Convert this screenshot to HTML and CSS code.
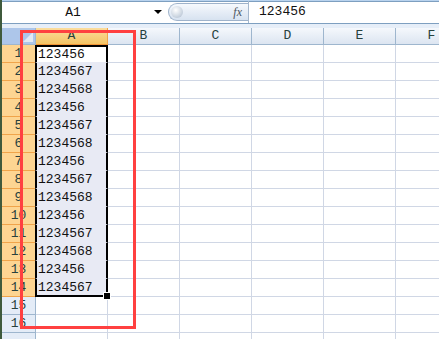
FILE: index.html
```html
<!DOCTYPE html>
<html lang="zh-CN">
  <head>
    <meta charset="UTF-8" />
    <title>Sheet1</title>
    <link rel="stylesheet" href="styles.css">
  </head>
  <body>
    <div class="window">
      <!-- 编辑栏 -->
      <div class="formula-bar">
        <div class="name-box">
          <span class="name">A1</span>
          <span class="arrow"></span>
        </div>
        <div class="fx-pill">
          <span class="knob"></span>
          <span class="fx">fx</span>
        </div>
        <div class="formula">123456</div>
      </div>
      <div class="bar-gap"></div>

      <!-- 表格 -->
      <div class="sheet">
        <div class="row head">
          <div class="corner"></div>
          <div class="col on">A</div>
          <div class="col">B</div>
          <div class="col">C</div>
          <div class="col">D</div>
          <div class="col">E</div>
          <div class="col">F</div>
        </div>
        <div class="row"><div class="rh on">1</div><div class="c sel first">123456</div><div class="c"></div><div class="c"></div><div class="c"></div><div class="c"></div><div class="c"></div></div>
        <div class="row"><div class="rh on">2</div><div class="c sel">1234567</div><div class="c"></div><div class="c"></div><div class="c"></div><div class="c"></div><div class="c"></div></div>
        <div class="row"><div class="rh on">3</div><div class="c sel">1234568</div><div class="c"></div><div class="c"></div><div class="c"></div><div class="c"></div><div class="c"></div></div>
        <div class="row"><div class="rh on">4</div><div class="c sel">123456</div><div class="c"></div><div class="c"></div><div class="c"></div><div class="c"></div><div class="c"></div></div>
        <div class="row"><div class="rh on">5</div><div class="c sel">1234567</div><div class="c"></div><div class="c"></div><div class="c"></div><div class="c"></div><div class="c"></div></div>
        <div class="row"><div class="rh on">6</div><div class="c sel">1234568</div><div class="c"></div><div class="c"></div><div class="c"></div><div class="c"></div><div class="c"></div></div>
        <div class="row"><div class="rh on">7</div><div class="c sel">123456</div><div class="c"></div><div class="c"></div><div class="c"></div><div class="c"></div><div class="c"></div></div>
        <div class="row"><div class="rh on">8</div><div class="c sel">1234567</div><div class="c"></div><div class="c"></div><div class="c"></div><div class="c"></div><div class="c"></div></div>
        <div class="row"><div class="rh on">9</div><div class="c sel">1234568</div><div class="c"></div><div class="c"></div><div class="c"></div><div class="c"></div><div class="c"></div></div>
        <div class="row"><div class="rh on">10</div><div class="c sel">123456</div><div class="c"></div><div class="c"></div><div class="c"></div><div class="c"></div><div class="c"></div></div>
        <div class="row"><div class="rh on">11</div><div class="c sel">1234567</div><div class="c"></div><div class="c"></div><div class="c"></div><div class="c"></div><div class="c"></div></div>
        <div class="row"><div class="rh on">12</div><div class="c sel">1234568</div><div class="c"></div><div class="c"></div><div class="c"></div><div class="c"></div><div class="c"></div></div>
        <div class="row"><div class="rh on">13</div><div class="c sel">123456</div><div class="c"></div><div class="c"></div><div class="c"></div><div class="c"></div><div class="c"></div></div>
        <div class="row"><div class="rh on">14</div><div class="c sel last">1234567</div><div class="c"></div><div class="c"></div><div class="c"></div><div class="c"></div><div class="c"></div></div>
        <div class="row"><div class="rh">15</div><div class="c"></div><div class="c"></div><div class="c"></div><div class="c"></div><div class="c"></div><div class="c"></div></div>
        <div class="row"><div class="rh">16</div><div class="c"></div><div class="c"></div><div class="c"></div><div class="c"></div><div class="c"></div><div class="c"></div></div>
        <div class="row"><div class="rh"></div><div class="c"></div><div class="c"></div><div class="c"></div><div class="c"></div><div class="c"></div><div class="c"></div></div>
      </div>

      <!-- 红色标注框 -->
      <div class="mark"></div>
    </div>
  </body>
</html>
```

FILE: styles.css
```css
* {
  margin: 0;
  padding: 0;
  box-sizing: border-box;
}

body {
  background: #fff;
  font-family: "Liberation Mono", "Noto Sans CJK SC", monospace;
  font-size: 13px;
  color: #111;
}

.window {
  position: relative;
  width: 439px;
  height: 339px;
  overflow: hidden;
  border-left: 2px solid #3f5a3c;
}

/* 编辑栏 */
.formula-bar {
  display: flex;
  align-items: center;
  height: 24px;
  background: #fff;
  border-top: 1px solid #b9d3ee;
  box-shadow: inset 0 1px 0 #7e9fc0;
  border-bottom: 1px solid #7e9fc0;
}

.name-box {
  display: flex;
  align-items: center;
  width: 166px;
  height: 100%;
}

.name {
  flex: 1;
  text-align: center;
  padding-right: 10px;
  padding-top: 1px;
}

.arrow {
  width: 0;
  height: 0;
  margin-right: 6px;
  border-left: 4px solid transparent;
  border-right: 4px solid transparent;
  border-top: 4px solid #000;
}

.fx-pill {
  display: flex;
  align-items: center;
  justify-content: space-between;
  width: 80px;
  height: 18px;
  padding: 0 6px 0 2px;
  border: 1px solid #9fb3cb;
  border-right: none;
  border-radius: 9px 0 0 9px;
  background: linear-gradient(#f6f9fd, #d7e2f0);
}

.knob {
  width: 12px;
  height: 12px;
  border-radius: 50%;
  background: radial-gradient(circle at 40% 35%, #fff, #c4cfdc 70%, #a9b6c6);
}

.fx {
  font-family: "Liberation Serif", serif;
  font-style: italic;
  font-size: 12px;
  color: #4b5461;
}

.formula {
  flex: 1;
  height: 100%;
  padding: 3px 0 0 10px;
  border-left: 1px solid #a4b7cd;
}

.bar-gap {
  height: 4px;
  background: #e6eef8;
}

/* 表格 */
.sheet {
  width: 470px;
}

.row {
  display: flex;
  height: 18px;
}

.row.head {
  height: 17px;
}

.corner {
  position: relative;
  flex: none;
  width: 34px;
  background: #adc6ea;
  border-right: 1px solid #9eb6ce;
  border-bottom: 1px solid #9eb6ce;
}

.corner::after {
  content: "";
  position: absolute;
  right: 2px;
  bottom: 2px;
  border-left: 10px solid transparent;
  border-bottom: 10px solid #e2e9f3;
}

.col {
  flex: none;
  width: 72px;
  text-align: center;
  line-height: 16px;
  color: #27413e;
  background: linear-gradient(#f5f8fc, #dce5f1);
  border-right: 1px solid #9eb6ce;
  border-bottom: 1px solid #9eb6ce;
}

.col.on {
  background: linear-gradient(#fbdc9c, #f4c465);
  border-right-color: #f0a44a;
  border-bottom-color: #f29536;
}

.rh {
  flex: none;
  width: 34px;
  text-align: center;
  line-height: 18px;
  color: #27413e;
  background: #e4ecf7;
  border-right: 1px solid #9eb6ce;
  border-bottom: 1px solid #9eb6ce;
}

.rh.on {
  background: #fdd592;
  border-right-color: #f0a44a;
  border-bottom-color: #f0a44a;
}

.c {
  flex: none;
  width: 72px;
  padding-left: 2px;
  line-height: 17px;
  border-right: 1px solid #d0d7e5;
  border-bottom: 1px solid #d0d7e5;
}

/* 选中区域 */
.c.sel {
  position: relative;
  background: #e8eaf4;
  border-left: 2px solid #000;
  border-right: 2px solid #000;
  border-bottom-color: #e8eaf4;
  margin-left: -1px;
  width: 73px;
  padding-left: 1px;
}

.c.sel.first {
  background: #fff;
  box-shadow: inset 0 2px 0 #000;
  padding-top: 1px;
}

.c.sel.last {
  border-bottom: 2px solid #000;
}

.c.sel.last::after {
  content: "";
  position: absolute;
  right: -5px;
  bottom: -5px;
  width: 6px;
  height: 6px;
  background: #000;
  border: 1px solid #fff;
}

/* 标注框 */
.mark {
  position: absolute;
  left: 18px;
  top: 30px;
  width: 116px;
  height: 299px;
  border: 3px solid #ff4040;
}
```
